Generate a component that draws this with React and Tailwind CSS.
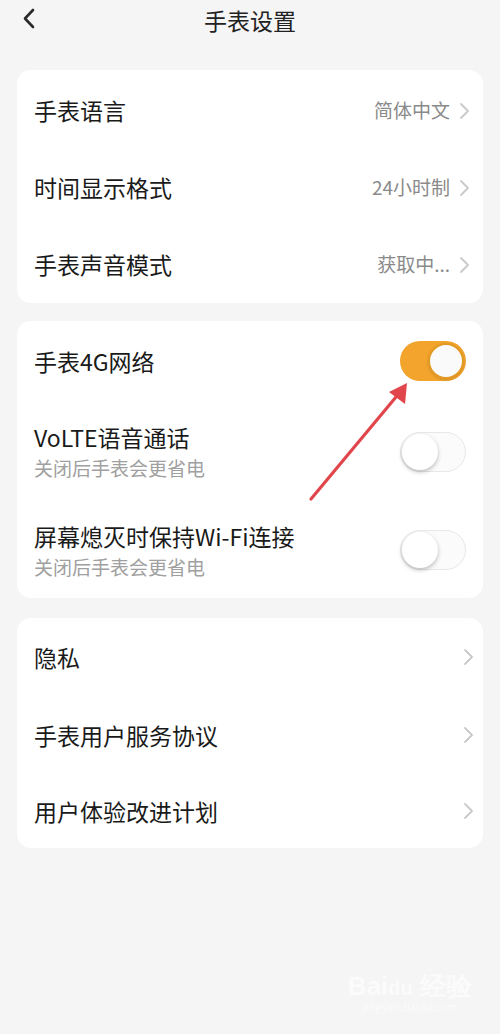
import React from 'react';

const font = { fontFamily: '"Noto Sans CJK SC", "Noto Sans", sans-serif' };

function Chevron({ className = '' }) {
    return (
        <svg width="12" height="18" viewBox="0 0 12 18" className={className}>
            <path d="M2 2 L9 9 L2 16" fill="none" stroke="#c9c9c9" strokeWidth="1.8" strokeLinecap="round" strokeLinejoin="round" />
        </svg>
    );
}

function Toggle({ on }) {
    if (on) {
        return (
            <div className="w-[66px] h-[40px] rounded-full bg-[#f2a42c] flex items-center justify-end px-[2px]">
                <div className="w-[36px] h-[36px] rounded-full bg-[#fafafa] border-2 border-[#e39a25] shadow-sm"></div>
            </div>
        );
    }
    return (
        <div className="w-[66px] h-[40px] rounded-full bg-[#fbfbfb] border border-[#e8e8e8] flex items-center px-[1px]">
            <div className="w-[36px] h-[36px] rounded-full bg-white shadow-[0_2px_4px_rgba(0,0,0,0.25)]"></div>
        </div>
    );
}

function LinkRow({ label, value, h = 'h-[77px]', pr = 'pr-[14px]' }) {
    return (
        <div className={`flex items-center justify-between pl-[17px] ${h} ${pr}`}>
            <span className="text-[23px] text-[#1a1a1a]">{label}</span>
            <div className="flex items-center gap-[9px]">
                {value && <span className="text-[19px] text-[#8a8a8a]">{value}</span>}
                <Chevron />
            </div>
        </div>
    );
}

function SwitchRow({ label, sub, on, h }) {
    return (
        <div className={`flex items-center justify-between pl-[17px] pr-[17px] ${h}`}>
            <div className="flex flex-col">
                <span className="text-[23px] leading-[32px] text-[#1a1a1a]">{label}</span>
                {sub && <span className="text-[19px] leading-[28px] text-[#a0a0a0] mt-[1px]">{sub}</span>}
            </div>
            <Toggle on={on} />
        </div>
    );
}

export default function App() {
    return (
        <div className="relative w-[500px] h-[1034px] bg-[#f5f5f5] overflow-hidden" style={font}>
            {/* Header */}
            <div className="h-[40px] flex items-center justify-center relative">
                <svg width="16" height="24" viewBox="0 0 16 24" className="absolute left-[21px] top-[7px]">
                    <path d="M12 3 L4 11.5 L12 20" fill="none" stroke="#2a2a2a" strokeWidth="2.6" strokeLinecap="round" strokeLinejoin="round" />
                </svg>
                <span className="text-[23px] text-[#222]">手表设置</span>
            </div>

            <div className="flex flex-col px-[17px] pt-[30px]">
                {/* Card 1 */}
                <div className="bg-white rounded-[14px] pt-[2px]">
                    <LinkRow label="手表语言" value="简体中文" pr="pr-[12px]" />
                    <LinkRow label="时间显示格式" value="24小时制" pr="pr-[12px]" />
                    <LinkRow label="手表声音模式" value="获取中..." pr="pr-[12px]" />
                </div>

                {/* Card 2 */}
                <div className="bg-white rounded-[14px] mt-[18px]">
                    <SwitchRow label="手表4G网络" on h="h-[80px]" />
                    <SwitchRow label="VoLTE语音通话" sub="关闭后手表会更省电" h="h-[101px]" />
                    <SwitchRow label="屏幕熄灭时保持Wi-Fi连接" sub="关闭后手表会更省电" h="h-[96px]" />
                </div>

                {/* Card 3 */}
                <div className="bg-white rounded-[14px] mt-[20px]">
                    <LinkRow label="隐私" h="h-[78px]" pr="pr-[8px]" />
                    <LinkRow label="手表用户服务协议" h="h-[78px]" pr="pr-[8px]" />
                    <LinkRow label="用户体验改进计划" h="h-[74px]" pr="pr-[8px]" />
                </div>
            </div>

            {/* Annotation arrow */}
            <svg width="500" height="1034" className="absolute left-0 top-0 pointer-events-none">
                <line x1="311" y1="499" x2="396" y2="397" stroke="#e0464b" strokeWidth="3.2" strokeLinecap="round" />
                <polygon points="407,383 405,404 389,392" fill="#e0464b" />
            </svg>

            {/* Watermark */}
            <div className="absolute right-[28px] bottom-[22px] flex flex-col items-center opacity-80">
                <span className="text-[26px] font-bold text-[#fdfdfd] leading-none" style={{ fontFamily: '"Liberation Sans", sans-serif' }}>Bai<span className="text-[20px]">du</span> 经验</span>
                <span className="text-[11px] text-[#fdfdfd] leading-none mt-[2px]">jingyan.baidu.com</span>
            </div>
        </div>
    );
}
